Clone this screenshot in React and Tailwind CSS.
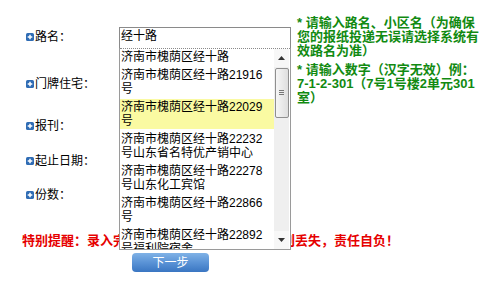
import React from "react";

const Icon = () => (
  <svg width="8" height="8" viewBox="0 0 8 8" className="shrink-0">
    <rect x="0" y="0" width="8" height="8" rx="1.6" fill="#2f6cb4" />
    <path d="M4 1.7v4.6M1.7 4h4.6" stroke="#fff" strokeWidth="1.5" />
  </svg>
);

const Label = ({ text }) => (
  <div className="w-[97px] shrink-0 flex items-center gap-[1px] pl-[4px] text-[12px] leading-[14px] text-black">
    <Icon />
    <span>{text}</span>
  </div>
);

const opts = [
  { lines: ["济南市槐荫区经十路"] },
  { lines: ["济南市槐荫区经十路21916", "号"] },
  { lines: ["济南市槐荫区经十路22029", "号"], hl: true },
  { lines: ["济南市槐荫区经十路22232", "号山东省名特优产销中心"] },
  { lines: ["济南市槐荫区经十路22278", "号山东化工宾馆"] },
  { lines: ["济南市槐荫区经十路22866", "号"] },
  { lines: ["济南市槐荫区经十路22892", "号福利院宿舍"] },
];

const Triangle = ({ down }) => (
  <svg width="7" height="4" viewBox="0 0 7 4">
    {down ? (
      <path d="M0 0h7L3.5 4z" fill="#333" />
    ) : (
      <path d="M0 4h7L3.5 0z" fill="#333" />
    )}
  </svg>
);

const Dropdown = () => (
  <div className="absolute left-0 top-full w-[172px] h-[202px] border-x border-b border-[#9a9a9a] bg-white flex flex-col">
    <div className="h-0 border-t border-dotted border-[#8a8a8a]" />
    <div className="flex flex-1 min-h-0">
      <div className="w-[154px] overflow-hidden text-[12px] leading-[14px] text-black">
        {opts.map((o, i) => (
          <div
            key={i}
            className={`py-[1px] mb-[2px] pl-[1px] whitespace-nowrap ${o.hl ? "bg-[#fafaa2]" : ""}`}
          >
            {o.lines.map((l, j) => (
              <div key={j}>{l}</div>
            ))}
          </div>
        ))}
      </div>
      <div className="w-[15px] flex flex-col items-center bg-[#efefef]">
        <div className="h-[18px] w-full flex items-center justify-center bg-[#f7f7f7]">
          <Triangle />
        </div>
        <div className="mt-[1px] w-[14px] h-[50px] rounded-[2px] border border-[#8f8f8f] bg-linear-to-r from-[#f6f6f6] to-[#dedede] flex items-center justify-center">
          <div className="flex flex-col gap-[1px]">
            <div className="w-[5px] h-[1px] bg-[#777]" />
            <div className="w-[5px] h-[1px] bg-[#777]" />
            <div className="w-[5px] h-[1px] bg-[#777]" />
          </div>
        </div>
        <div className="flex-1" />
        <div className="h-[18px] w-full flex items-center justify-center bg-[#f7f7f7]">
          <Triangle down />
        </div>
      </div>
    </div>
  </div>
);

const Hint = ({ lines }) => (
  <div className="ml-[6px] text-[13px] leading-[14px] font-bold text-[#118a11] whitespace-nowrap">
    {lines.map((l, i) => (
      <div key={i}>{l}</div>
    ))}
  </div>
);

export default function App() {
  return (
    <div className="w-[496px] h-[291px] bg-white overflow-hidden font-['Liberation_Sans','Noto_Sans_CJK_SC',sans-serif]">
      <div className="pl-[22px] pt-[14px]">
        <div className="h-[46px] flex items-center">
          <Label text="路名：" />
          <div className="w-[172px] shrink-0 relative z-10">
            <div className="h-[21px] border-x border-t border-[#8a8a8a] bg-white pl-[1px] pt-[1px] text-[12px] leading-[14px] text-black">
              经十路
            </div>
            <Dropdown />
          </div>
          <Hint
            lines={[
              "* 请输入路名、小区名（为确保",
              "您的报纸投递无误请选择系统有",
              "效路名为准）",
            ]}
          />
        </div>
        <div className="h-[47px] flex items-center">
          <Label text="门牌住宅：" />
          <div className="w-[172px] shrink-0" />
          <Hint
            lines={[
              "* 请输入数字（汉字无效）例：",
              "7-1-2-301（7号1号楼2单元301",
              "室）",
            ]}
          />
        </div>
        <div className="h-[38px] flex items-center">
          <Label text="报刊：" />
        </div>
        <div className="h-[32px] flex items-center">
          <Label text="起止日期：" />
        </div>
        <div className="h-[36px] flex items-center">
          <Label text="份数：" />
        </div>
        <div className="mt-[20px] text-[13px] leading-[15px] font-bold text-[#e60000] whitespace-nowrap">
          特别提醒：录入完成后，请核对地址，以免报刊丢失，责任自负！
        </div>
        <div className="mt-[5px] ml-[110px] w-[77px] h-[19px] rounded-[4px] bg-linear-to-b from-[#80b2e6] via-[#5a93d6] to-[#3a76c2] flex items-center justify-center text-white text-[12px] leading-[14px]">
          下一步
        </div>
      </div>
    </div>
  );
}
